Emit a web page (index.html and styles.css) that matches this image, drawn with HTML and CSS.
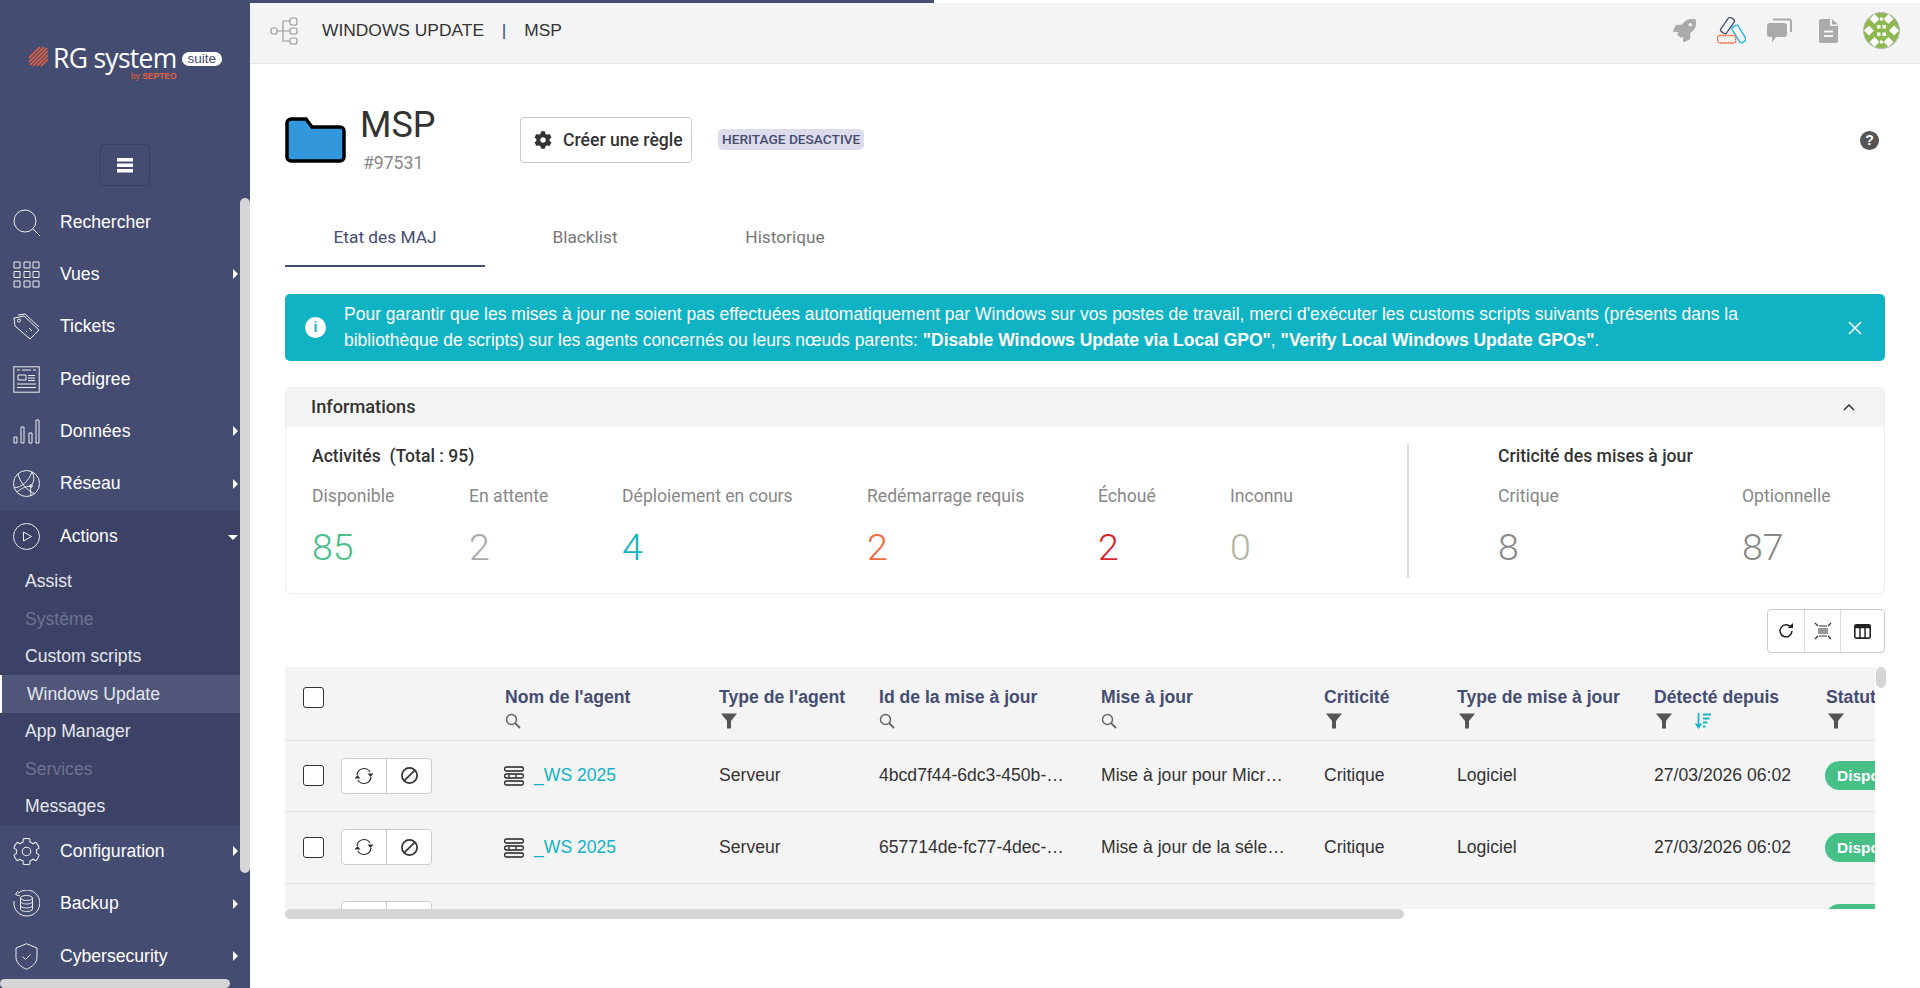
FILE: index.html
```html
<!DOCTYPE html>
<html lang="fr">
<head>
  <meta charset="UTF-8">
  <title>Windows Update | MSP</title>
  <link rel="stylesheet" href="styles.css">
</head>
<body>

<!-- Shared icons -->
<svg class="icon-defs" width="0" height="0">
  <symbol id="i-cog" viewBox="0 0 512 512"><path d="M487.4 315.7l-42.6-24.6c4.3-23.2 4.3-47 0-70.2l42.6-24.6c4.9-2.8 7.1-8.6 5.5-14-11.1-35.6-30-67.8-54.7-94.6-3.8-4.1-10-5.1-14.8-2.3L380.8 110c-17.9-15.4-38.5-27.3-60.8-35.1V25.8c0-5.6-3.9-10.5-9.4-11.7-36.7-8.2-74.3-7.8-109.2 0-5.5 1.2-9.4 6.1-9.4 11.7V75c-22.2 7.9-42.8 19.8-60.8 35.1L88.7 85.5c-4.9-2.8-11-1.9-14.8 2.3-24.7 26.7-43.6 58.9-54.7 94.6-1.7 5.4.6 11.2 5.5 14L67.3 221c-4.3 23.2-4.3 47 0 70.2l-42.6 24.6c-4.9 2.8-7.1 8.6-5.5 14 11.1 35.6 30 67.8 54.7 94.6 3.8 4.1 10 5.1 14.8 2.3l42.6-24.6c17.9 15.4 38.5 27.3 60.8 35.1v49.2c0 5.6 3.9 10.5 9.4 11.7 36.7 8.2 74.3 7.8 109.2 0 5.5-1.2 9.4-6.1 9.4-11.7v-49.2c22.2-7.9 42.8-19.8 60.8-35.1l42.6 24.6c4.9 2.8 11 1.9 14.8-2.3 24.7-26.7 43.6-58.9 54.7-94.6 1.5-5.5-.7-11.3-5.6-14.1zM256 336c-44.1 0-80-35.9-80-80s35.9-80 80-80 80 35.9 80 80-35.9 80-80 80z"/></symbol>
  <symbol id="i-filter" viewBox="0 0 16 16"><path d="M0 .5h16L10 8v7.500H6V8z"/></symbol>
  <symbol id="i-search" viewBox="0 0 16 16"><circle cx="6.500" cy="6.500" r="5" fill="none" stroke="#666" stroke-width="1.500"/><path d="M10 10l5 5" stroke="#666" stroke-width="1.800"/></symbol>
  <symbol id="i-sync" viewBox="0 0 20 20"><g fill="none" stroke="#333" stroke-width="1.200"><path d="M3 9a7 7 0 0 1 13-3"/><path d="M17 11a7 7 0 0 1-13 3"/></g><path d="M13.500 7.500h6L16.500 11zM.5 12.500h6L3.500 9z" fill="#333"/></symbol>
  <symbol id="i-ban" viewBox="0 0 20 20"><circle cx="10" cy="10" r="8" fill="none" stroke="#333" stroke-width="1.800"/><path d="M15.500 4.500l-11 11" stroke="#333" stroke-width="1.800"/></symbol>
  <symbol id="i-server" viewBox="0 0 20 20"><g fill="none" stroke="#222" stroke-width="1.300"><rect x=".7" y="1" width="18.600" height="4" rx="1.500"/><rect x=".7" y="8" width="18.600" height="4" rx="1.500"/><rect x=".7" y="15" width="18.600" height="4" rx="1.500"/><path d="M5 8.500v3M12 8.500v3"/></g></symbol>
  <symbol id="i-sort" viewBox="0 0 16 16"><path d="M3.500 0v14M.7 10.500l2.800 4 2.800-4" fill="none" stroke="#14b4c4" stroke-width="1.700"/><path d="M8 1.500h8M8 5.500h6.500M8 9.500h4.500M8 13.500h2.500" stroke="#14b4c4" stroke-width="2"/></symbol>
</svg>

<div class="sidebar">
  <div class="logo">
    <svg class="logo-mark" viewBox="0 0 20 21" width="20" height="21">
      <path d="M1 12L12 1M1 16L16 1M2 19L19 2M5 20L20 5M9 20L20 9M13 20l7-7" stroke="#e8603c" stroke-width="1.700" fill="none"/>
    </svg>
    <div class="logo-text">
      <span class="logo-name">RG system</span>
      <span class="logo-by">by <b>SEPTEO</b></span>
    </div>
    <span class="logo-suite">suite</span>
  </div>

  <button class="menu-toggle">
    <svg viewBox="0 0 16 16" width="16" height="16"><path d="M0 1h16v3.500H0zM0 6.500h16V10H0zM0 12h16v3.500H0z" fill="#fff"/></svg>
  </button>

  <nav class="nav">
    <a class="nav-item">
      <svg class="nav-icon" viewBox="0 0 27 27"><circle cx="12" cy="12" r="11"/><path d="M20 20l7 7"/></svg>
      <span>Rechercher</span>
    </a>
    <a class="nav-item has-sub">
      <svg class="nav-icon" viewBox="0 0 27 27"><path d="M1 1h6v6H1zM11 1h6v6h-6zM20 1h6v6h-6zM1 10.500h6v6H1zM11 10.500h6v6h-6zM20 10.500h6v6h-6zM1 20h6v6H1zM11 20h6v6h-6zM20 20h6v6h-6z"/></svg>
      <span>Vues</span>
    </a>
    <a class="nav-item">
      <svg class="nav-icon" viewBox="0 0 27 27"><path d="M1 5l10-2 15 14-9 9L2 13z"/><path d="M5 2l7-1 14 13"/><circle cx="6" cy="7.500" r="1.500"/><path d="M13 18l1 1M16 15l3 3"/></svg>
      <span>Tickets</span>
    </a>
    <a class="nav-item">
      <svg class="nav-icon" viewBox="0 0 27 27"><rect x=".8" y=".8" width="25.400" height="25.400"/><path d="M4 4h3M9 4h9M20 4h3M5 9h8v5H5zM15 9.500h7M15 12h7M15 14.500h7M4 18h19M4 21.500h19"/></svg>
      <span>Pedigree</span>
    </a>
    <a class="nav-item has-sub">
      <svg class="nav-icon" viewBox="0 0 27 27"><path d="M1 19h3v6H1zM8 9h3v16H8zM16 15h3v10h-3zM23 2h3v23h-3z"/></svg>
      <span>Données</span>
    </a>
    <a class="nav-item has-sub">
      <svg class="nav-icon" viewBox="0 0 27 27"><circle cx="13.500" cy="13.500" r="13"/><path d="M1 18c8-1 14-6 18-16M5 4c2 8 8 16 17 20M18 16c-6 0-12 4-14 6M19 2c3 6 2 10-1 14-1 3 0 7 0 10"/><circle cx="18" cy="16" r="1.300"/></svg>
      <span>Réseau</span>
    </a>

    <div class="nav-group">
      <a class="nav-item open">
        <svg class="nav-icon" viewBox="0 0 27 27"><circle cx="13.500" cy="13.500" r="13"/><path d="M10.500 9l8 4.500-8 4.500z"/></svg>
        <span>Actions</span>
      </a>
      <a class="sub-item">Assist</a>
      <a class="sub-item disabled">Système</a>
      <a class="sub-item">Custom scripts</a>
      <a class="sub-item active">Windows Update</a>
      <a class="sub-item">App Manager</a>
      <a class="sub-item disabled">Services</a>
      <a class="sub-item">Messages</a>
    </div>

    <a class="nav-item has-sub">
      <svg class="nav-icon" viewBox="0 0 512 512"><use href="#i-cog" fill="none" stroke="#eee" stroke-width="20"/></svg>
      <span>Configuration</span>
    </a>
    <a class="nav-item has-sub">
      <svg class="nav-icon" viewBox="0 0 27 27"><path d="M5 3.500A13 13 0 1 1 1 11"/><path d="M5 1L2.500 4.500 7 6"/><ellipse cx="13.500" cy="8" rx="6" ry="2.500"/><path d="M7.500 8v11c0 1.500 3 2.500 6 2.500s6-1 6-2.500V8M7.500 11.500c0 1.500 3 2.500 6 2.500s6-1 6-2.500M7.500 15.500c0 1.500 3 2.500 6 2.500s6-1 6-2.500"/></svg>
      <span>Backup</span>
    </a>
    <a class="nav-item has-sub">
      <svg class="nav-icon" viewBox="0 0 27 27"><path d="M13.500.7L24 5v9c0 6-5 10-10.500 12.300C8 24 3 20 3 14V5z"/><path d="M9.500 13.500l3 3 5-5"/></svg>
      <span>Cybersecurity</span>
    </a>
  </nav>

  <div class="sidebar-thumb"></div>
  <div class="sidebar-hthumb"></div>
</div>

<div class="main">
  <div class="progress"></div>

  <header class="topbar">
    <svg class="tree-icon" viewBox="0 0 28 28" width="28" height="28">
      <g fill="none" stroke="#999" stroke-width="1.200">
        <rect x="1" y="11" width="6" height="6" rx="2"/>
        <rect x="20" y="1" width="7" height="7" rx="2"/>
        <rect x="20" y="11" width="7" height="6" rx="2"/>
        <rect x="20" y="21" width="7" height="6" rx="2"/>
        <path d="M7 14h13M13 14V4h7M13 14v10h7"/>
      </g>
    </svg>
    <div class="crumb">WINDOWS UPDATE <span class="crumb-sep">|</span> MSP</div>

    <div class="topbar-icons">
      <svg class="top-icon" viewBox="0 0 512 512" width="23" height="23"><path fill="#aaa" d="M505.050 19.100a15.890 15.890 0 0 0-12.200-12.200C460.650 0 435.460 0 410.360 0c-103.200 0-165.100 55.200-211.290 128H94.870A48 48 0 0 0 52 154.490l-49.420 98.800A24 24 0 0 0 24.070 288h103.770l-22.470 22.470a32 32 0 0 0 0 45.250l50.900 50.910a32 32 0 0 0 45.260 0L224 384.160V488a24 24 0 0 0 34.700 21.490l98.700-49.390a47.910 47.910 0 0 0 26.500-42.900V312.790c72.590-46.300 128-108.400 128-211.090.1-25.200.1-50.400-6.850-82.600zM384 168a40 40 0 1 1 40-40 40 40 0 0 1-40 40z"/></svg>
      <svg class="top-icon" viewBox="0 0 29 27" width="29" height="27" fill="none" stroke-width="1.300">
        <rect x="7" y="0" width="7" height="17" rx="2" transform="rotate(35 10.500 8.500)" stroke="#454c72"/>
        <rect x="18.500" y="8" width="7" height="18" rx="2" transform="rotate(-32 22 17)" stroke="#1bb3e8"/>
        <rect x=".7" y="18.500" width="18" height="7.500" rx="2" stroke="#f26a3d" stroke-dasharray="2 .5"/>
      </svg>
      <svg class="top-icon" viewBox="0 0 25 25" width="25" height="25"><path d="M3 5h14a3 3 0 0 1 3 3v8a3 3 0 0 1-3 3H9l-4 5.500V19H3a3 3 0 0 1-3-3V8a3 3 0 0 1 3-3z" fill="#aaa"/><path d="M6 1.500h16a2 2 0 0 1 2 2V14" fill="none" stroke="#aaa" stroke-width="2"/></svg>
      <svg class="top-icon doc-icon" viewBox="0 0 19 24" width="19" height="24"><path d="M2 0h9v7h8v15a2 2 0 0 1-2 2H2a2 2 0 0 1-2-2V2a2 2 0 0 1 2-2zM13 0l6 5.500h-6z" fill="#aaa"/><path d="M5 12.500h9M5 17h9" stroke="#f4f4f4" stroke-width="2"/></svg>
      <svg class="avatar" viewBox="0 0 37 37" width="37" height="37">
        <circle cx="18.500" cy="18.500" r="18" fill="#8cb84f" stroke="#bbb"/>
        <path fill="#fff" d="M6.500 7l5-5 5 5-5 5zM20.500 7l5-5 5 5-5 5zM1 18.500l5-5 5 5-5 5zM26 18.500l5-5 5 5-5 5zM6.500 30l5-5 5 5-5 5zM20.500 30l5-5 5 5-5 5z"/>
        <path fill="#fff" d="M14 13h3.500v3.500H14zM19.500 13H23v3.500h-3.500zM14 20.500h3.500V24H14zM19.500 20.500H23V24h-3.500zM17 5.500h3v3h-3zM17 28.500h3v3h-3z"/>
      </svg>
    </div>
  </header>

  <div class="content">
    <div class="title-row">
      <svg class="folder" viewBox="0 0 61 46" width="61" height="46"><path d="M6 2h15l6 8h28a4 4 0 0 1 4 4v26a4 4 0 0 1-4 4H6a4 4 0 0 1-4-4V6a4 4 0 0 1 4-4z" fill="#3397db" stroke="#000" stroke-width="3.500"/></svg>
      <div class="title-text">
        <h1>MSP</h1>
        <div class="title-id">#97531</div>
      </div>
      <button class="btn-rule"><svg viewBox="0 0 512 512" width="18" height="18"><use href="#i-cog" fill="#333"/></svg>Créer une règle</button>
      <span class="badge">HERITAGE DESACTIVE</span>
      <span class="help">?</span>
    </div>

    <div class="tabs">
      <a class="tab active">Etat des MAJ</a>
      <a class="tab">Blacklist</a>
      <a class="tab">Historique</a>
    </div>

    <div class="alert">
      <span class="alert-icon">i</span>
      <p>Pour garantir que les mises à jour ne soient pas effectuées automatiquement par Windows sur vos postes de travail, merci d'exécuter les customs scripts suivants (présents dans la bibliothèque de scripts) sur les agents concernés ou leurs nœuds parents: <b>"Disable Windows Update via Local GPO"</b>, <b>"Verify Local Windows Update GPOs"</b>.</p>
      <svg class="alert-close" viewBox="0 0 14 14" width="14" height="14"><path d="M1 1l12 12M13 1L1 13" stroke="#fff" stroke-width="1.500"/></svg>
    </div>

    <section class="card">
      <div class="card-head">
        <span>Informations</span>
        <svg viewBox="0 0 12 8" width="12" height="8"><path d="M1 7l5-5 5 5" fill="none" stroke="#333" stroke-width="1.500"/></svg>
      </div>
      <div class="card-body">
        <div class="stats-left">
          <div class="stats-title">Activités &nbsp;(Total : 95)</div>
          <div class="stats-grid">
            <div class="stat"><div class="stat-label">Disponible</div><div class="stat-value green">85</div></div>
            <div class="stat"><div class="stat-label">En attente</div><div class="stat-value grey">2</div></div>
            <div class="stat"><div class="stat-label">Déploiement en cours</div><div class="stat-value teal">4</div></div>
            <div class="stat"><div class="stat-label">Redémarrage requis</div><div class="stat-value orange">2</div></div>
            <div class="stat"><div class="stat-label">Échoué</div><div class="stat-value red">2</div></div>
            <div class="stat"><div class="stat-label">Inconnu</div><div class="stat-value sand">0</div></div>
          </div>
        </div>
        <div class="stats-right">
          <div class="stats-title">Criticité des mises à jour</div>
          <div class="stats-grid two">
            <div class="stat"><div class="stat-label">Critique</div><div class="stat-value dim">8</div></div>
            <div class="stat"><div class="stat-label">Optionnelle</div><div class="stat-value dim">87</div></div>
          </div>
        </div>
      </div>
    </section>

    <div class="toolbar">
      <div class="btn-group">
        <button><svg viewBox="0 0 16 16" width="16" height="16"><path d="M13 4.500A6 6 0 1 0 14 8" fill="none" stroke="#222" stroke-width="1.500"/><path d="M9.500 5H15V0z" fill="#222"/></svg></button>
        <button><svg viewBox="0 0 18 18" width="18" height="18"><path d="M5 4h8M4 7h10M4 9h10M4 11h10M5 14h8" stroke="#333"/><path d="M1 1l3 3M17 1l-3 3M1 17l3-3M17 17l-3-3" stroke="#333" stroke-width="1.200"/></svg></button>
        <button><svg viewBox="0 0 16 14" width="17" height="15"><path d="M0 2a2 2 0 0 1 2-2h12a2 2 0 0 1 2 2v10a2 2 0 0 1-2 2H2a2 2 0 0 1-2-2z" fill="#222"/><path d="M1.500 4h3.400v8.500H1.500zM6.300 4h3.400v8.500H6.300zM11.100 4h3.400v8.500h-3.400z" fill="#fff"/></svg></button>
      </div>
    </div>

    <div class="table-wrap">
      <table class="grid">
        <colgroup>
          <col class="c-select"><col class="c-name"><col class="c-type"><col class="c-id"><col class="c-update"><col class="c-crit"><col class="c-kind"><col class="c-date"><col class="c-status">
        </colgroup>
        <thead>
          <tr>
            <th><span class="check"></span></th>
            <th>Nom de l'agent<div class="th-tools"><svg viewBox="0 0 16 16"><use href="#i-search"/></svg></div></th>
            <th>Type de l'agent<div class="th-tools"><svg class="th-filter" viewBox="0 0 16 16"><use href="#i-filter"/></svg></div></th>
            <th>Id de la mise à jour<div class="th-tools"><svg viewBox="0 0 16 16"><use href="#i-search"/></svg></div></th>
            <th>Mise à jour<div class="th-tools"><svg viewBox="0 0 16 16"><use href="#i-search"/></svg></div></th>
            <th>Criticité<div class="th-tools"><svg class="th-filter" viewBox="0 0 16 16"><use href="#i-filter"/></svg></div></th>
            <th>Type de mise à jour<div class="th-tools"><svg class="th-filter" viewBox="0 0 16 16"><use href="#i-filter"/></svg></div></th>
            <th>Détecté depuis<div class="th-tools"><svg class="th-filter" viewBox="0 0 16 16"><use href="#i-filter"/></svg><svg viewBox="0 0 16 16"><use href="#i-sort"/></svg></div></th>
            <th>Statut<div class="th-tools"><svg class="th-filter" viewBox="0 0 16 16"><use href="#i-filter"/></svg></div></th>
          </tr>
        </thead>
        <tbody>
          <tr>
            <td><div class="row-actions"><span class="check"></span><div class="row-btns"><button><svg viewBox="0 0 20 20" width="20" height="20"><use href="#i-sync"/></svg></button><button><svg viewBox="0 0 20 20" width="19" height="19"><use href="#i-ban"/></svg></button></div></div></td>
            <td><svg class="srv" viewBox="0 0 20 20" width="20" height="20"><use href="#i-server"/></svg><a class="agent">_WS 2025</a></td>
            <td>Serveur</td>
            <td>4bcd7f44-6dc3-450b-a8e1-37c2</td>
            <td>Mise à jour pour Microsoft Defender</td>
            <td>Critique</td>
            <td>Logiciel</td>
            <td class="date">27/03/2026 06:02</td>
            <td><span class="pill">Disponible</span></td>
          </tr>
          <tr>
            <td><div class="row-actions"><span class="check"></span><div class="row-btns"><button><svg viewBox="0 0 20 20" width="20" height="20"><use href="#i-sync"/></svg></button><button><svg viewBox="0 0 20 20" width="19" height="19"><use href="#i-ban"/></svg></button></div></div></td>
            <td><svg class="srv" viewBox="0 0 20 20" width="20" height="20"><use href="#i-server"/></svg><a class="agent">_WS 2025</a></td>
            <td>Serveur</td>
            <td>657714de-fc77-4dec-91b2-60af</td>
            <td>Mise à jour de la sélection</td>
            <td>Critique</td>
            <td>Logiciel</td>
            <td class="date">27/03/2026 06:02</td>
            <td><span class="pill">Disponible</span></td>
          </tr>
          <tr>
            <td><div class="row-actions"><span class="check check-hidden"></span><div class="row-btns"><button><svg viewBox="0 0 20 20" width="20" height="20"><use href="#i-sync"/></svg></button><button><svg viewBox="0 0 20 20" width="19" height="19"><use href="#i-ban"/></svg></button></div></div></td>
            <td></td><td></td><td></td><td></td><td></td><td></td><td></td>
            <td><span class="pill">Disponible</span></td>
          </tr>
        </tbody>
      </table>
    </div>
    <div class="table-hscroll"><div class="table-hthumb"></div></div>
    <div class="table-vthumb"></div>
  </div>
</div>

</body>
</html>
```

FILE: styles.css
```css
/* General reset */
* {
  margin: 0;
  padding: 0;
  box-sizing: border-box;
}

body {
  font-family: "Liberation Sans", Arial, sans-serif;
  display: flex;
  height: 100vh;
  overflow: hidden;
  background-color: #fff;
  color: #333;
}

.icon-defs {
  position: absolute;
}

button {
  font: inherit;
  background: #fff;
  cursor: pointer;
}

/* Sidebar */
.sidebar {
  position: relative;
  flex: 0 0 250px;
  height: 988px;
  background-color: #454c72;
  color: #fff;
  overflow: hidden;
}

.logo {
  height: 144px;
  display: flex;
  align-items: flex-start;
  padding: 46px 0 0 28px;
}

.logo-mark {
  margin-right: 5px;
}

.logo-text {
  display: flex;
  flex-direction: column;
  align-items: flex-end;
}

.logo-name {
  font-family: "Open Sans", sans-serif;
  font-size: 26.500px;
  line-height: 24px;
  letter-spacing: -0.7px;
  font-weight: 400;
}

.logo-by {
  font-size: 8.500px;
  line-height: 12px;
  color: #e8603c;
}

.logo-suite {
  margin: 6px 0 0 5px;
  padding: 0 6px;
  height: 14px;
  line-height: 14px;
  font-size: 13.500px;
  background: #fff;
  color: #454c72;
  border-radius: 8px;
}

.menu-toggle {
  display: flex;
  align-items: center;
  justify-content: center;
  width: 50px;
  height: 42px;
  margin-left: 100px;
  margin-bottom: 10px;
  background: transparent;
  border: 1px solid #3a4063;
  border-radius: 4px;
}

.nav-item {
  position: relative;
  display: flex;
  align-items: center;
  height: 52.300px;
  padding-left: 13px;
  font-size: 17.600px;
  color: #fff;
}

.nav-icon {
  width: 27px;
  height: 27px;
  margin-right: 20px;
  fill: none;
  stroke: #eee;
  stroke-width: 1;
  flex-shrink: 0;
}

.nav-item.has-sub::after {
  content: "";
  position: absolute;
  right: 12px;
  top: 50%;
  margin-top: -5px;
  border-left: 5px solid #fff;
  border-top: 5px solid transparent;
  border-bottom: 5px solid transparent;
}

.nav-item.open {
  height: 52px;
}

.nav-item.open::after {
  content: "";
  position: absolute;
  right: 12px;
  top: 50%;
  margin-top: -2px;
  border-top: 5px solid #fff;
  border-left: 5px solid transparent;
  border-right: 5px solid transparent;
}

.nav-group {
  margin-top: 1px;
  background-color: #3c4265;
}

.sub-item {
  display: flex;
  align-items: center;
  height: 37.500px;
  padding-left: 25px;
  font-size: 17.600px;
  color: #e6e7ee;
}

.sub-item.disabled {
  color: #6d7392;
}

.sub-item.active {
  background-color: #50567a;
  border-left: 2px solid #fff;
}

.sidebar-thumb {
  position: absolute;
  left: 240px;
  top: 198px;
  width: 10px;
  height: 675px;
  background: #d5d5d5;
  border-radius: 5px;
}

.sidebar-hthumb {
  position: absolute;
  left: 0;
  top: 979px;
  width: 230px;
  height: 9px;
  background: #d5d5d5;
  border-radius: 5px;
}

/* Main area */
.main {
  position: relative;
  flex: 1;
  min-width: 0;
}

.progress {
  width: 684px;
  height: 3px;
  background-color: #454c72;
}

.topbar {
  display: flex;
  align-items: center;
  height: 61px;
  padding: 0 20px 5px;
  background-color: #f4f4f4;
  border-bottom: 1px solid #e6e6e6;
}

.tree-icon {
  margin-right: 24px;
}

.crumb {
  font-size: 17.400px;
  color: #333;
}

.crumb-sep {
  margin: 0 13px;
  color: #454c72;
}

.topbar-icons {
  display: flex;
  align-items: center;
  margin-left: auto;
  gap: 21px;
}

.doc-icon {
  margin-left: 6px;
}

.avatar {
  margin-left: 4px;
}

.content {
  padding: 36px 35px 0;
}

.title-row {
  display: flex;
  height: 76px;
}

.folder {
  margin: 17px 14px 0 0;
}

.title-text {
  width: 160px;
}

.title-text h1 {
  font-family: Roboto, sans-serif;
  font-weight: 400;
  font-size: 36px;
  line-height: 50px;
}

.title-id {
  font-size: 17.600px;
  font-family: Roboto, sans-serif;
  color: #888;
  margin: 3px 0 0 3px;
}

.btn-rule {
  display: flex;
  align-items: center;
  gap: 11px;
  height: 46px;
  width: 172px;
  margin-top: 17px;
  padding-left: 13px;
  font-family: Roboto, sans-serif;
  font-weight: 500;
  font-size: 17.600px;
  white-space: nowrap;
  color: #333;
  border: 1px solid #ccc;
  border-radius: 4px;
}

.badge {
  height: 21px;
  margin: 29px 0 0 26px;
  padding: 0 4px;
  line-height: 21px;
  font-family: Roboto, sans-serif;
  font-weight: 500;
  font-size: 13.700px;
  color: #454c72;
  background-color: #dcdcec;
  border-radius: 5px;
}

.help {
  width: 19px;
  height: 19px;
  margin: 31px 6px 0 auto;
  border-radius: 50%;
  background-color: #555;
  color: #fff;
  font-weight: 700;
  font-size: 14px;
  line-height: 19px;
  text-align: center;
}

/* Tabs */
.tabs {
  display: flex;
  margin-top: 36px;
}

.tab {
  width: 200px;
  height: 55px;
  padding-top: 15px;
  text-align: center;
  font-size: 17.300px;
  font-family: Roboto, sans-serif;
  color: #777;
}

.tab.active {
  color: #454c72;
  border-bottom: 2px solid #454c72;
}

/* Info banner */
.alert {
  display: flex;
  align-items: center;
  height: 67px;
  margin-top: 27px;
  padding: 0 23px 0 20px;
  background-color: #10b3c3;
  border-radius: 5px;
  color: #fff;
}

.alert-icon {
  flex-shrink: 0;
  width: 21px;
  height: 21px;
  margin-right: 18px;
  border-radius: 50%;
  background: #fff;
  color: #10b3c3;
  font-weight: 700;
  font-size: 14px;
  line-height: 21px;
  text-align: center;
}

.alert p {
  flex: 1;
  padding-right: 60px;
  font-size: 17.500px;
  line-height: 25.500px;
}

.alert-close {
  flex-shrink: 0;
}

/* Informations card */
.card {
  margin-top: 26px;
  height: 207px;
  border: 1px solid #eee;
  border-radius: 6px;
  font-family: Roboto, sans-serif;
}

.card-head {
  display: flex;
  align-items: center;
  justify-content: space-between;
  height: 39px;
  padding: 0 29px 2px 25px;
  background-color: #f4f4f4;
  font-weight: 500;
  font-size: 18.200px;
}

.card-body {
  display: flex;
  padding-top: 17px;
}

.stats-left {
  width: 1123px;
  padding-left: 26px;
  height: 134px;
  border-right: 2px solid #ddd;
}

.stats-right {
  padding-left: 89px;
}

.stats-title {
  font-weight: 500;
  font-size: 17.600px;
  line-height: 24px;
  color: #333;
}

.stats-grid {
  display: grid;
  grid-template-columns: 157px 153px 245px 231px 132px 120px;
  margin-top: 16px;
}

.stats-grid.two {
  grid-template-columns: 244px 120px;
}

.stat-label {
  font-size: 17.600px;
  line-height: 24px;
  color: #888;
}

.stat-value {
  margin-top: 14px;
  font-weight: 300;
  font-size: 37.500px;
  line-height: 50px;
}

.green { color: #47c088; }
.grey { color: #aaa; }
.teal { color: #10b3c3; }
.orange { color: #f26a3d; }
.red { color: #d9262c; }
.sand { color: #b3b3a6; }
.dim { color: #888; }

/* Table toolbar */
.toolbar {
  display: flex;
  justify-content: flex-end;
  margin-top: 15px;
}

.btn-group {
  display: flex;
  width: 118px;
  height: 44px;
  border: 1px solid #ccc;
  border-radius: 4px;
}

.btn-group button {
  display: flex;
  align-items: center;
  justify-content: center;
  width: 36px;
  border: 0;
  border-left: 1px solid #ddd;
  background: transparent;
}

.btn-group button:first-child {
  border-left: 0;
}

.btn-group button:last-child {
  flex: 1;
}

/* Table */
.table-wrap {
  width: 1590px;
  height: 242px;
  margin-top: 14px;
  overflow: hidden;
  background-color: #fff;
}

.grid {
  table-layout: fixed;
  width: 1723px;
  border-collapse: collapse;
  background-color: #f4f4f4;
  font-size: 17.600px;
  color: #333;
}

.c-select { width: 202px; }
.c-name { width: 214px; }
.c-type { width: 160px; }
.c-id { width: 222px; }
.c-update { width: 223px; }
.c-crit { width: 133px; }
.c-kind { width: 197px; }
.c-date { width: 172px; }
.c-status { width: 200px; }

.grid th {
  height: 73px;
  padding: 20px 0 0 18px;
  text-align: left;
  vertical-align: top;
  font-weight: 700;
  color: #454c72;
  white-space: nowrap;
  border-bottom: 1px solid #e2e2e2;
}

.th-tools {
  display: flex;
  gap: 23px;
  margin-top: 5px;
  height: 16px;
}

.th-tools svg {
  width: 16px;
  height: 16px;
}

.th-filter {
  fill: #555;
  margin-left: 2px;
}

.grid td {
  height: 71.500px;
  padding: 0 18px;
  white-space: nowrap;
  overflow: hidden;
  text-overflow: ellipsis;
  border-bottom: 1px solid #e2e2e2;
}

.grid td.date {
  padding-right: 0;
}

.check {
  display: block;
  width: 21px;
  height: 21px;
  flex-shrink: 0;
  background: #fff;
  border: 1px solid #333;
  border-radius: 3px;
}

.check-hidden {
  visibility: hidden;
}

.row-actions {
  display: flex;
  align-items: center;
  gap: 17px;
}

.row-btns {
  display: flex;
  flex-shrink: 0;
  width: 91px;
  height: 36px;
  background: #fff;
  border: 1px solid #ccc;
  border-radius: 4px;
}

.row-btns button {
  flex: 1;
  display: flex;
  align-items: center;
  justify-content: center;
  border: 0;
  background: transparent;
}

.row-btns button + button {
  border-left: 1px solid #ccc;
}

.srv {
  vertical-align: middle;
  margin: 0 10px 0 -1px;
}

.agent {
  color: #10b3c3;
}

.pill {
  display: inline-block;
  height: 29px;
  margin-left: -1px;
  padding: 0 12px;
  line-height: 29px;
  border-radius: 15px;
  background-color: #47c088;
  color: #fff;
  font-weight: 700;
  font-size: 15.500px;
}

.table-hscroll {
  width: 1590px;
  height: 10px;
}

.table-hthumb {
  width: 1119px;
  height: 10px;
  background-color: #d5d5d5;
  border-radius: 5px;
}

/* overlay scrollbar of the table */
.table-vthumb {
  position: absolute;
  left: 1626px;
  top: 667px;
  width: 10px;
  height: 21px;
  background-color: #d5d5d5;
  border-radius: 5px;
}
```
